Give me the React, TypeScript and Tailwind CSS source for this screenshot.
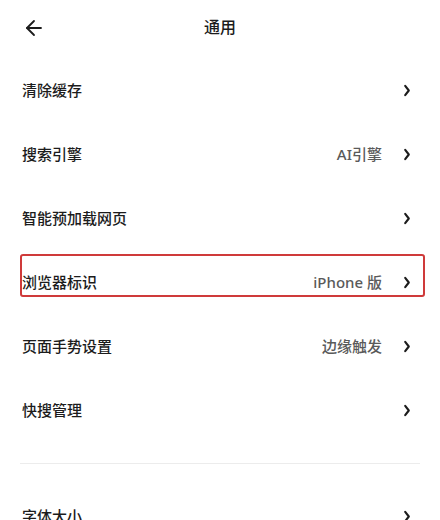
import { ArrowLeft } from "lucide-react";

interface Item {
  label: string;
  value?: string;
  marked?: boolean;
}

const items: Item[] = [
  { label: "清除缓存" },
  { label: "搜索引擎", value: "AI引擎" },
  { label: "智能预加载网页" },
  { label: "浏览器标识", value: "iPhone 版", marked: true },
  { label: "页面手势设置", value: "边缘触发" },
  { label: "快搜管理" },
];

function Chevron() {
  return (
    <svg width="8" height="13" viewBox="0 0 8 13" className="shrink-0">
      <path d="M2.2 1.8 L5.8 6.5 L2.2 11.2" fill="none" stroke="#1c1c1c" strokeWidth="2.1" strokeLinecap="round" strokeLinejoin="round" />
    </svg>
  );
}

function Row({ label, value, marked }: Item) {
  return (
    <div className="relative flex items-center h-16 pl-[22px] pr-[29px] pb-[2px]">
      {marked && (
        <div className="absolute left-[20px] right-[15px] top-[3px] h-[43px] border-2 border-[#cf3a3a] rounded-[3px]" />
      )}
      <span className="flex-1 text-[15px] font-medium text-[#1c1c1c]">{label}</span>
      {value && <span className="text-[15px] font-medium text-[#5a5a5a] mr-[21px]">{value}</span>}
      <Chevron />
    </div>
  );
}

export default function App() {
  return (
    <div
      className="w-[440px] h-[520px] overflow-hidden bg-white"
      style={{ fontFamily: '"Noto Sans", "Noto Sans CJK SC", sans-serif' }}
    >
      <div className="relative flex items-center justify-center h-[59px] pb-[5px]">
        <ArrowLeft className="absolute left-[22px] top-[16px] w-[24px] h-[24px] text-[#1c1c1c]" strokeWidth={1.8} />
        <h1 className="text-[16px] font-medium text-[#1c1c1c]">通用</h1>
      </div>

      {items.map((it) => (
        <Row key={it.label} {...it} />
      ))}

      <div className="mx-[20px] mt-[20px] mb-[21px] h-px bg-[#ececec]" />

      <Row label="字体大小" />
    </div>
  );
}
